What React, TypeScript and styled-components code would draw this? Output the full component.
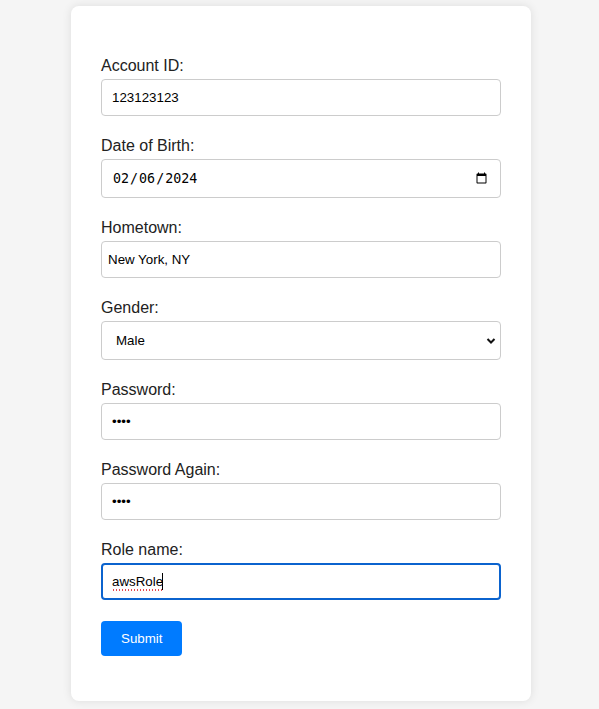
import React from "react";
import styled, { createGlobalStyle } from "styled-components";

const GlobalStyle = createGlobalStyle`
  html, body {
    margin: 0;
    padding: 0;
    background-color: #f5f5f5;
    font-family: "Liberation Sans", Arial, sans-serif;
  }
`;

const Page = styled.div`
  display: flex;
  justify-content: center;
  align-items: flex-start;
  padding: 6px 0 0 3px;
  min-height: 703px;
`;

const Card = styled.form`
  width: 460px;
  box-sizing: border-box;
  padding: 51px 30px 45px;
  background-color: #fff;
  border-radius: 8px;
  box-shadow: 0 0 10px rgba(0, 0, 0, 0.1);
`;

const Field = styled.div`
  display: flex;
  flex-direction: column;
  margin-bottom: 21px;
`;

const Label = styled.label`
  font-size: 16px;
  color: #222;
  margin-bottom: 4px;
`;

const Input = styled.input<{ $focused?: boolean; $mono?: boolean; $pad?: number }>`
  box-sizing: border-box;
  width: 400px;
  height: ${(p) => (p.$mono ? "39px" : "37px")};
  padding: 10px ${(p) => p.$pad ?? 10}px;
  font-family: ${(p) =>
    p.$mono
      ? `"DejaVu Sans Mono", "Liberation Mono", monospace`
      : `"Liberation Sans", Arial, sans-serif`};
  font-size: 13.33px;
  color: #000;
  background: #fff;
  border: ${(p) => (p.$focused ? "2px solid #0b63ce" : "1px solid #ccc")};
  border-radius: 4px;
  outline: none;
`;

const SelectWrap = styled.div`
  position: relative;
  width: 400px;
`;

const Select = styled.select`
  display: block;
  box-sizing: border-box;
  width: 400px;
  height: 39px;
  padding: 0 14px;
  appearance: none;
  font-family: "Liberation Sans", Arial, sans-serif;
  font-size: 13.33px;
  color: #000;
  background: #fff;
  border: 1px solid #ccc;
  border-radius: 4px;
  outline: none;
`;

const Chevron = styled.svg`
  position: absolute;
  right: 5px;
  top: 16px;
  pointer-events: none;
`;

const RoleWrap = styled.div`
  position: relative;
  width: 400px;
`;

const Squiggle = styled.span`
  position: absolute;
  left: 11px;
  top: 26px;
  width: 50px;
  height: 2px;
  background-image: radial-gradient(circle, #e5484d 0.8px, transparent 1px);
  background-size: 3px 2px;
  pointer-events: none;
`;

const Caret = styled.span`
  position: absolute;
  left: 61px;
  top: 10px;
  width: 1px;
  height: 17px;
  background: #000;
  pointer-events: none;
`;

const SubmitButton = styled.button`
  display: block;
  padding: 10px 20px;
  height: 35px;
  font-family: "Liberation Sans", Arial, sans-serif;
  font-size: 13.33px;
  color: #fff;
  background-color: #007bff;
  border: none;
  border-radius: 4px;
  cursor: pointer;
`;

export default function App() {
  return (
    <>
      <GlobalStyle />
      <Page>
        <Card onSubmit={(e) => e.preventDefault()}>
          <Field>
            <Label>Account ID:</Label>
            <Input type="text" defaultValue="123123123" />
          </Field>
          <Field>
            <Label>Date of Birth:</Label>
            <Input type="date" defaultValue="2024-02-06" $mono />
          </Field>
          <Field>
            <Label>Hometown:</Label>
            <Input type="text" defaultValue="New York, NY" $pad={6} />
          </Field>
          <Field>
            <Label>Gender:</Label>
            <SelectWrap>
              <Select defaultValue="male">
                <option value="male">Male</option>
                <option value="female">Female</option>
                <option value="other">Other</option>
              </Select>
              <Chevron width="10" height="8" viewBox="0 0 10 8">
                <path
                  d="M1.5 2 L5 5.5 L8.5 2"
                  fill="none"
                  stroke="#111"
                  strokeWidth="2"
                />
              </Chevron>
            </SelectWrap>
          </Field>
          <Field>
            <Label>Password:</Label>
            <Input type="password" defaultValue="1234" />
          </Field>
          <Field>
            <Label>Password Again:</Label>
            <Input type="password" defaultValue="1234" />
          </Field>
          <Field>
            <Label>Role name:</Label>
            <RoleWrap>
              <Input
                type="text"
                defaultValue="awsRole"
                $focused
                $pad={9}
                spellCheck={false}
              />
              <Squiggle />
              <Caret />
            </RoleWrap>
          </Field>
          <SubmitButton type="submit">Submit</SubmitButton>
        </Card>
      </Page>
    </>
  );
}
